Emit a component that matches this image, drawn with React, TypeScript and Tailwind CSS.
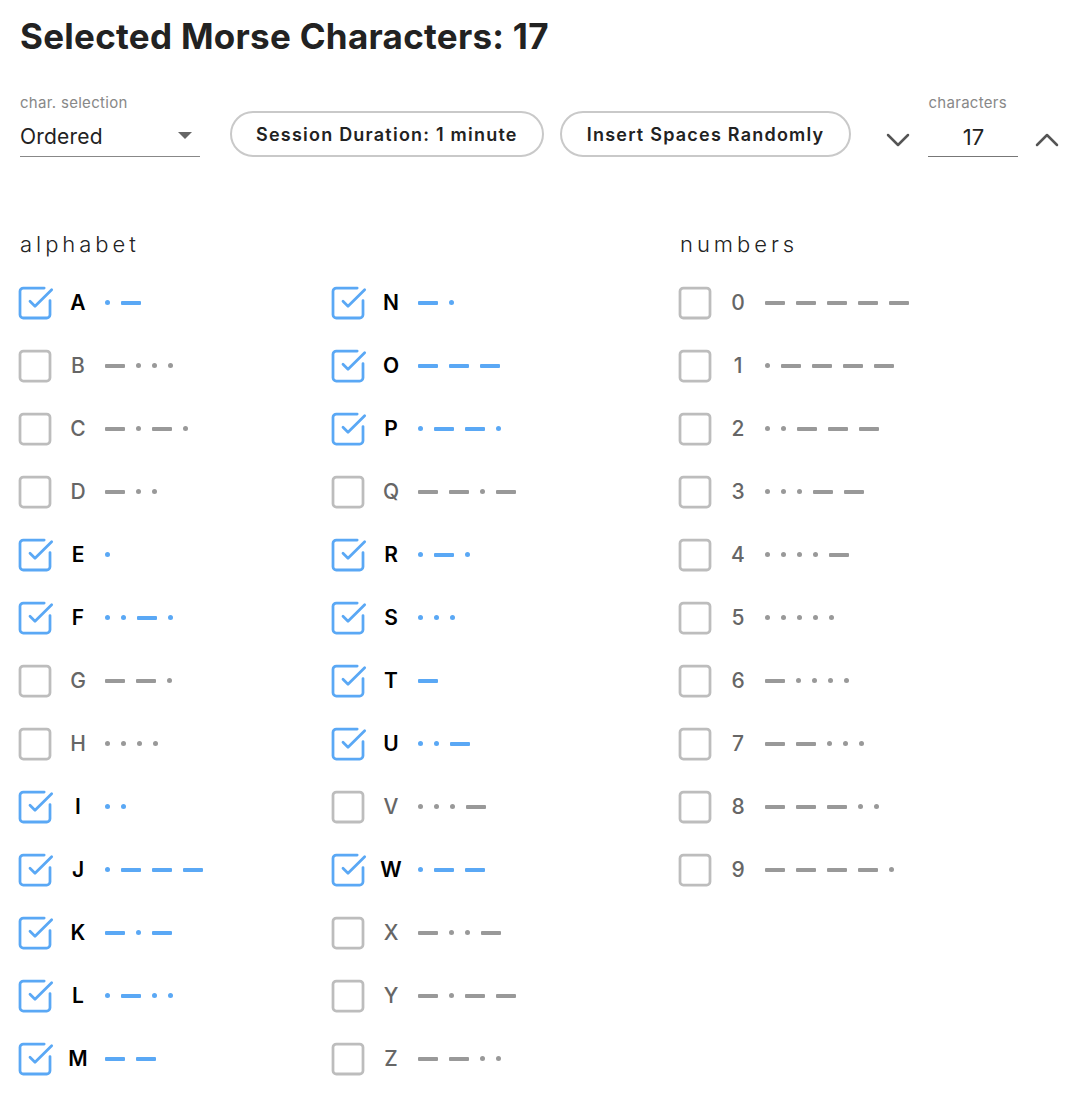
import { ChevronDown, ChevronUp } from 'lucide-react';

const MORSE: Record<string, string> = {
  A: '.-', B: '-...', C: '-.-.', D: '-..', E: '.', F: '..-.', G: '--.', H: '....',
  I: '..', J: '.---', K: '-.-', L: '.-..', M: '--', N: '-.', O: '---', P: '.--.',
  Q: '--.-', R: '.-.', S: '...', T: '-', U: '..-', V: '...-', W: '.--', X: '-..-',
  Y: '-.--', Z: '--..',
  '0': '-----', '1': '.----', '2': '..---', '3': '...--', '4': '....-',
  '5': '.....', '6': '-....', '7': '--...', '8': '---..', '9': '----.',
};

const SELECTED = new Set(['A', 'E', 'F', 'I', 'J', 'K', 'L', 'M', 'N', 'O', 'P', 'R', 'S', 'T', 'U', 'W']);

const Box = ({ checked }: { checked: boolean }) =>
  checked ? (
    <svg width="30" height="30" viewBox="3 3 18 18" fill="none" stroke="#5aa8f5" strokeWidth="1.65" strokeLinecap="round" strokeLinejoin="round" className="overflow-visible shrink-0">
      <path d="M21 10.5V19a2 2 0 0 1-2 2H5a2 2 0 0 1-2-2V5a2 2 0 0 1 2-2h12.5" />
      <path d="m9 11 3 3L22 4" />
    </svg>
  ) : (
    <svg width="30" height="30" viewBox="3 3 18 18" fill="none" stroke="#bdbdbd" strokeWidth="1.65" className="overflow-visible shrink-0">
      <rect x="3" y="3" width="18" height="18" rx="2" />
    </svg>
  );

const Code = ({ code, on }: { code: string; on: boolean }) => (
  <div className="flex items-center gap-[11px]">
    {code.split('').map((s, i) =>
      s === '.' ? (
        <span key={i} className={`block w-[5px] h-[5px] rounded-full ${on ? 'bg-[#5aa8f5]' : 'bg-[#999]'}`} />
      ) : (
        <span key={i} className={`block w-[20px] h-[4px] rounded-[1px] ${on ? 'bg-[#5aa8f5]' : 'bg-[#999]'}`} />
      )
    )}
  </div>
);

const Row = ({ ch }: { ch: string }) => {
  const on = SELECTED.has(ch);
  return (
    <div className="flex items-center h-[63px]">
      <Box checked={on} />
      <span className={`ml-[14px] w-[28px] text-center text-[21px] ${on ? 'font-semibold text-black' : 'font-medium text-[#666]'}`}>
        {ch}
      </span>
      <div className="ml-[13px]">
        <Code code={MORSE[ch]} on={on} />
      </div>
    </div>
  );
};

export default function App() {
  const col1 = 'ABCDEFGHIJKLM'.split('');
  const col2 = 'NOPQRSTUVWXYZ'.split('');
  const nums = '0123456789'.split('');

  return (
    <div className="min-h-screen bg-white px-[20px] pt-[14px] text-[#222]" style={{ fontFamily: 'Inter, "Noto Sans", sans-serif' }}>
      <h1 className="text-[35px] font-bold leading-[44px] tracking-[0.008em]">Selected Morse Characters: 17</h1>

      {/* controls */}
      <div className="flex items-end mt-[36px]">
        <div className="w-[180px] shrink-0">
          <div className="text-[15px] text-[#888] leading-[18px] tracking-[0.02em]">char. selection</div>
          <div className="flex items-end justify-between border-b border-[#888] h-[45px] pb-[7px]">
            <span className="text-[21px] leading-[24px] tracking-[0.01em]">Ordered</span>
            <svg width="14" height="8" viewBox="0 0 14 8" className="mr-[8px] mb-[9px]">
              <path d="M0 0h14L7 7z" fill="#666" />
            </svg>
          </div>
        </div>
        <button className="ml-[30px] shrink-0 whitespace-nowrap h-[46px] px-[24px] rounded-full border-2 border-[#c9c9c9] text-[18px] font-semibold tracking-[0.068em]">
          Session Duration: 1 minute
        </button>
        <button className="ml-[16px] shrink-0 whitespace-nowrap h-[46px] px-[25px] rounded-full border-2 border-[#c9c9c9] text-[18px] font-semibold tracking-[0.068em]">
          Insert Spaces Randomly
        </button>
        <ChevronDown className="ml-[27px] shrink-0 mb-[-3px] text-[#555]" size={40} strokeWidth={1.5} />
        <div className="ml-[10px] w-[90px] shrink-0">
          <div className="text-[15px] text-[#888] leading-[18px] tracking-[0.02em]">characters</div>
          <div className="border-b border-[#777] h-[45px] flex items-end justify-center pb-[5px] text-[22px] leading-[28px]">17</div>
        </div>
        <ChevronUp className="ml-[9px] shrink-0 mb-[-3px] text-[#555]" size={40} strokeWidth={1.5} />
      </div>

      {/* characters */}
      <div className="flex mt-[72px]">
        <div>
          <div className="text-[22px] font-light tracking-[0.18em] leading-[30px] mb-[12px]">alphabet</div>
          <div className="flex">
            <div className="w-[313px]">
              {col1.map((c) => (
                <Row key={c} ch={c} />
              ))}
            </div>
            <div className="w-[347px]">
              {col2.map((c) => (
                <Row key={c} ch={c} />
              ))}
            </div>
          </div>
        </div>
        <div>
          <div className="text-[22px] font-light tracking-[0.18em] leading-[30px] mb-[12px]">numbers</div>
          {nums.map((c) => (
            <Row key={c} ch={c} />
          ))}
        </div>
      </div>
    </div>
  );
}
